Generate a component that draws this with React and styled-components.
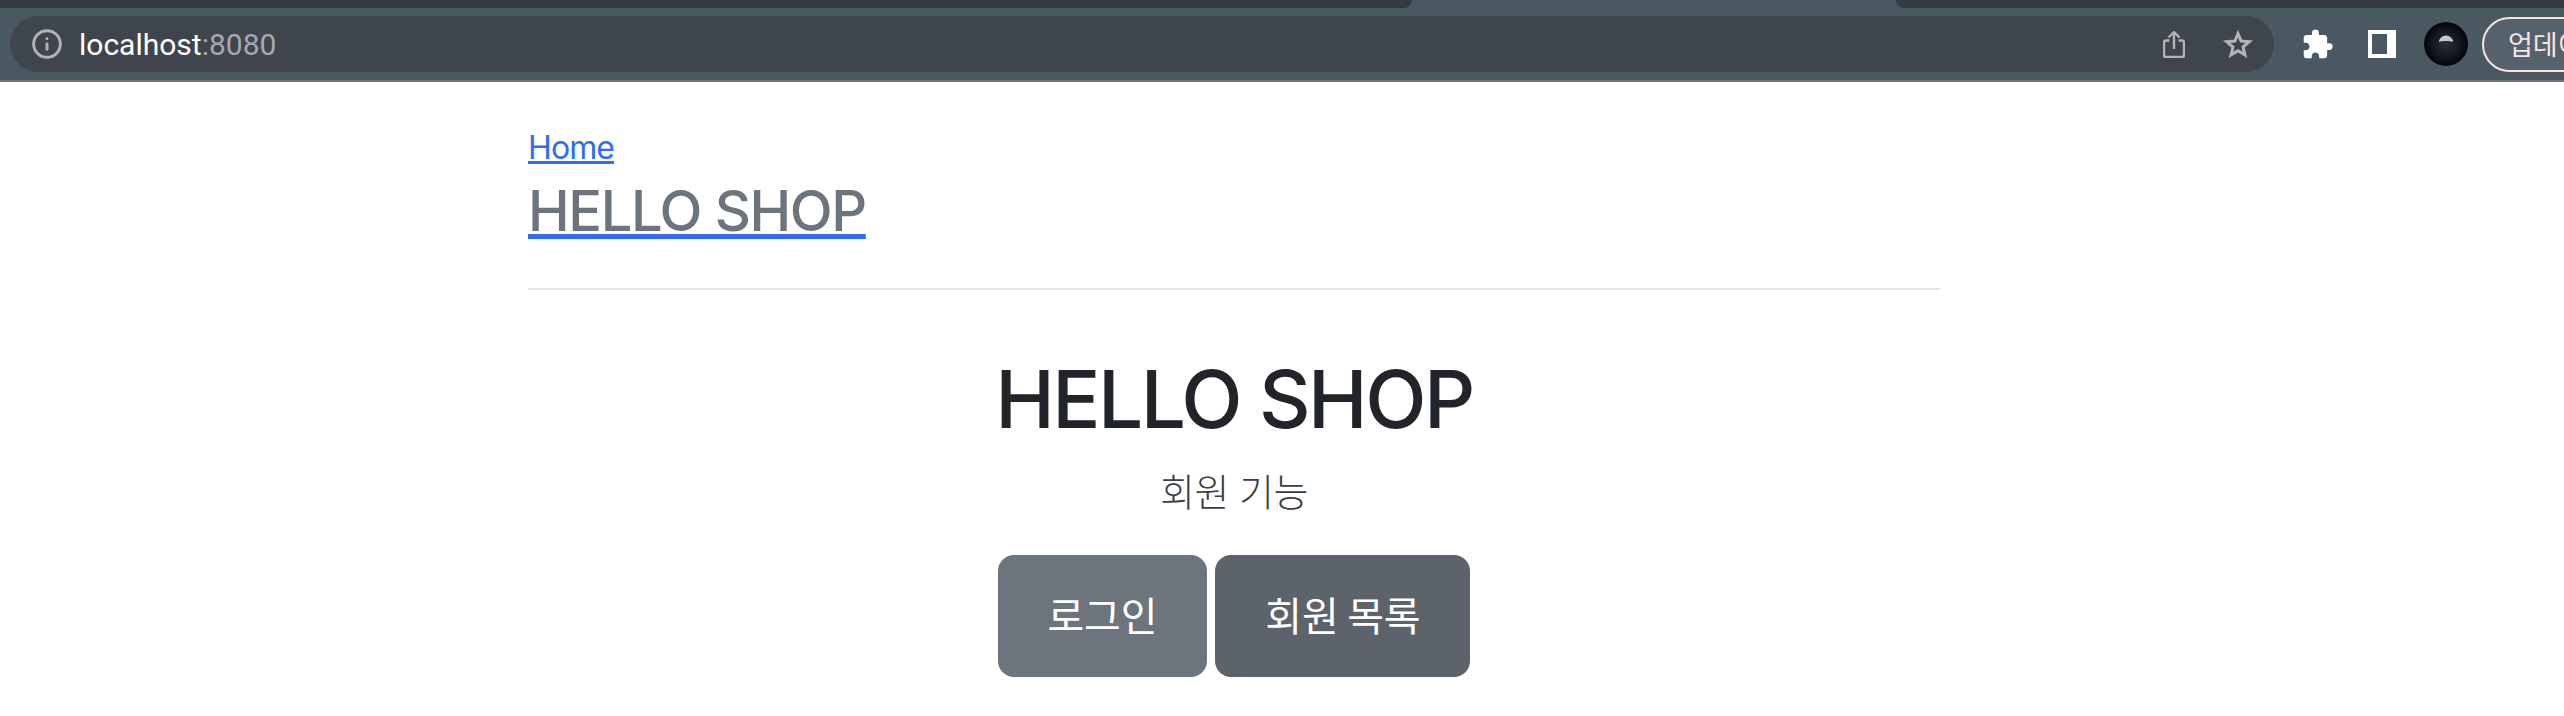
import React from 'react';
import styled, { createGlobalStyle } from 'styled-components';
import { Info } from 'lucide-react';
import { MdExtension } from 'react-icons/md';

const GlobalStyle = createGlobalStyle`
  html, body {
    margin: 0;
    padding: 0;
    background: #fff;
    overflow: hidden;
  }
  body {
    font-family: Inter, "Noto Sans CJK KR", "Liberation Sans", sans-serif;
    color: #212529;
  }
`;

const Chrome = styled.div`
  background: #4a5862;
  border-bottom: 2px solid #6b757c;
  height: 80px;
  overflow: hidden;
  font-family: Roboto, "Noto Sans CJK KR", sans-serif;
`;

const TabStrip = styled.div`
  height: 8px;
  display: flex;
  justify-content: space-between;
`;

const InactiveTab = styled.div`
  height: 8px;
  background: #323a42;
  width: ${p => p.$width}px;
  border-radius: ${p => (p.$side === 'left' ? '0 0 12px 0' : '0 0 0 12px')};
`;

const Toolbar = styled.div`
  height: 72px;
  display: flex;
  align-items: center;
  padding-left: 10px;
  box-sizing: border-box;
`;

const AddressBar = styled.div`
  width: 2264px;
  flex: none;
  height: 56px;
  border-radius: 28px;
  background: #3e454d;
  display: flex;
  align-items: center;
  padding: 0 21px;
  box-sizing: border-box;
`;

const Url = styled.div`
  margin-left: 16px;
  font-size: 30px;
  color: #fff;
  flex: 1;
  span {
    color: #a5a9ac;
  }
`;

const BarIcon = styled.span`
  display: flex;
  margin-left: ${p => p.$gap || 0}px;
`;

const ActionIcon = styled.span`
  flex: none;
  display: flex;
  color: #fff;
  margin-left: ${p => p.$gap}px;
`;

const UpdatePill = styled.div`
  flex: none;
  margin-left: 14px;
  width: 180px;
  height: 55px;
  border: 2px solid #f6e4e2;
  border-radius: 28px;
  background: #56626b;
  box-sizing: border-box;
  color: #f6e4e2;
  font-size: 27px;
  line-height: 50px;
  padding-left: 24px;
  white-space: nowrap;
  font-family: "Noto Sans CJK KR", sans-serif;
`;

const Page = styled.div`
  width: 1412px;
  margin-left: 528px;
`;

const Header = styled.header`
  padding-top: 42px;
  height: 208px;
  box-sizing: border-box;
  border-bottom: 2px solid #e5e5e5;
`;

const HomeLink = styled.a`
  display: block;
  width: fit-content;
  font-size: 32px;
  line-height: 48px;
  letter-spacing: -0.9px;
  color: #316cf4;
  text-decoration: underline;
  text-decoration-thickness: 3px;
`;

const BrandLink = styled.a`
  display: block;
  width: fit-content;
  margin-top: 5px;
  font-size: 56px;
  line-height: 68px;
  font-weight: 500;
  letter-spacing: -1.4px;
  color: #6c757d;
  text-decoration: underline;
  text-decoration-color: #316cf4;
  text-decoration-thickness: 5px;
`;

const Main = styled.main`
  display: flex;
  flex-direction: column;
  align-items: center;
  padding-top: 61px;
`;

const Title = styled.h1`
  margin: 0;
  font-size: 80px;
  line-height: 96px;
  font-weight: 500;
  letter-spacing: -2.5px;
  color: #212529;
`;

const Lead = styled.p`
  margin: 15px 0 0;
  font-size: 38px;
  line-height: 60px;
  font-weight: 300;
  letter-spacing: -0.5px;
  color: #3a3f44;
`;

const Buttons = styled.div`
  display: flex;
  gap: 8px;
  margin-top: 33px;
`;

const Button = styled.a`
  display: block;
  padding: 29px 50px 33px;
  font-size: 40px;
  line-height: 60px;
  letter-spacing: -0.2px;
  border-radius: 16px;
  color: #fff;
  background: ${p => (p.$dark ? '#5c636a' : '#6c757d')};
  font-family: "Noto Sans CJK KR", sans-serif;
`;

function App() {
  return (
    <>
      <GlobalStyle />
      <Chrome>
        <TabStrip>
          <InactiveTab $width={1412} $side="left" />
          <InactiveTab $width={668} $side="right" />
        </TabStrip>
        <Toolbar>
          <AddressBar>
            <Info size={32} color="#b4b4b4" strokeWidth={2.2} />
            <Url>
              localhost<span>:8080</span>
            </Url>
            <BarIcon>
              <svg width="22" height="28" viewBox="0 0 22 28" fill="none" stroke="#b4b4b4" strokeWidth="2.4" strokeLinejoin="round">
                <path d="M6.5 10.5H3a2 2 0 0 0-2 2V25a2 2 0 0 0 2 2h16a2 2 0 0 0 2-2V12.5a2 2 0 0 0-2-2h-3.5" />
                <path d="M11 19V2M5.5 7.5 11 2l5.5 5.5" />
              </svg>
            </BarIcon>
            <BarIcon $gap={38}>
              <svg width="30" height="28" viewBox="0 0 30 28" fill="none" stroke="#b4b4b4" strokeWidth="3" strokeLinejoin="miter">
                <path d="M15 3.5l3.1 7.6 8.2.6-6.3 5.3 2 8-7-4.3-7 4.3 2-8-6.3-5.3 8.2-.6z" />
              </svg>
            </BarIcon>
          </AddressBar>
          <ActionIcon $gap={27}>
            <MdExtension size={33} />
          </ActionIcon>
          <ActionIcon $gap={34}>
            <svg width="28" height="28" viewBox="0 0 28 28">
              <path fill="#fff" fillRule="evenodd" d="M0 0h28v28H0zM4 4v20h15V4z" />
            </svg>
          </ActionIcon>
          <ActionIcon $gap={28}>
            <svg width="44" height="44" viewBox="0 0 44 44">
              <defs>
                <radialGradient id="orb" cx="50%" cy="50%" r="50%">
                  <stop offset="0" stopColor="#2b2f3a" />
                  <stop offset="0.7" stopColor="#10121c" />
                  <stop offset="1" stopColor="#04050a" />
                </radialGradient>
              </defs>
              <circle cx="22" cy="22" r="22" fill="url(#orb)" />
              <path d="M15 20a7 6.5 0 0 1 14 0c-3-1.4-11-1.4-14 0z" fill="#c8c8c8" />
            </svg>
          </ActionIcon>
          <UpdatePill>업데이트</UpdatePill>
        </Toolbar>
      </Chrome>
      <Page>
        <Header>
          <HomeLink>Home</HomeLink>
          <BrandLink>HELLO SHOP</BrandLink>
        </Header>
        <Main>
          <Title>HELLO SHOP</Title>
          <Lead>회원 기능</Lead>
          <Buttons>
            <Button>로그인</Button>
            <Button $dark>회원 목록</Button>
          </Buttons>
        </Main>
      </Page>
    </>
  );
}

export default App;
